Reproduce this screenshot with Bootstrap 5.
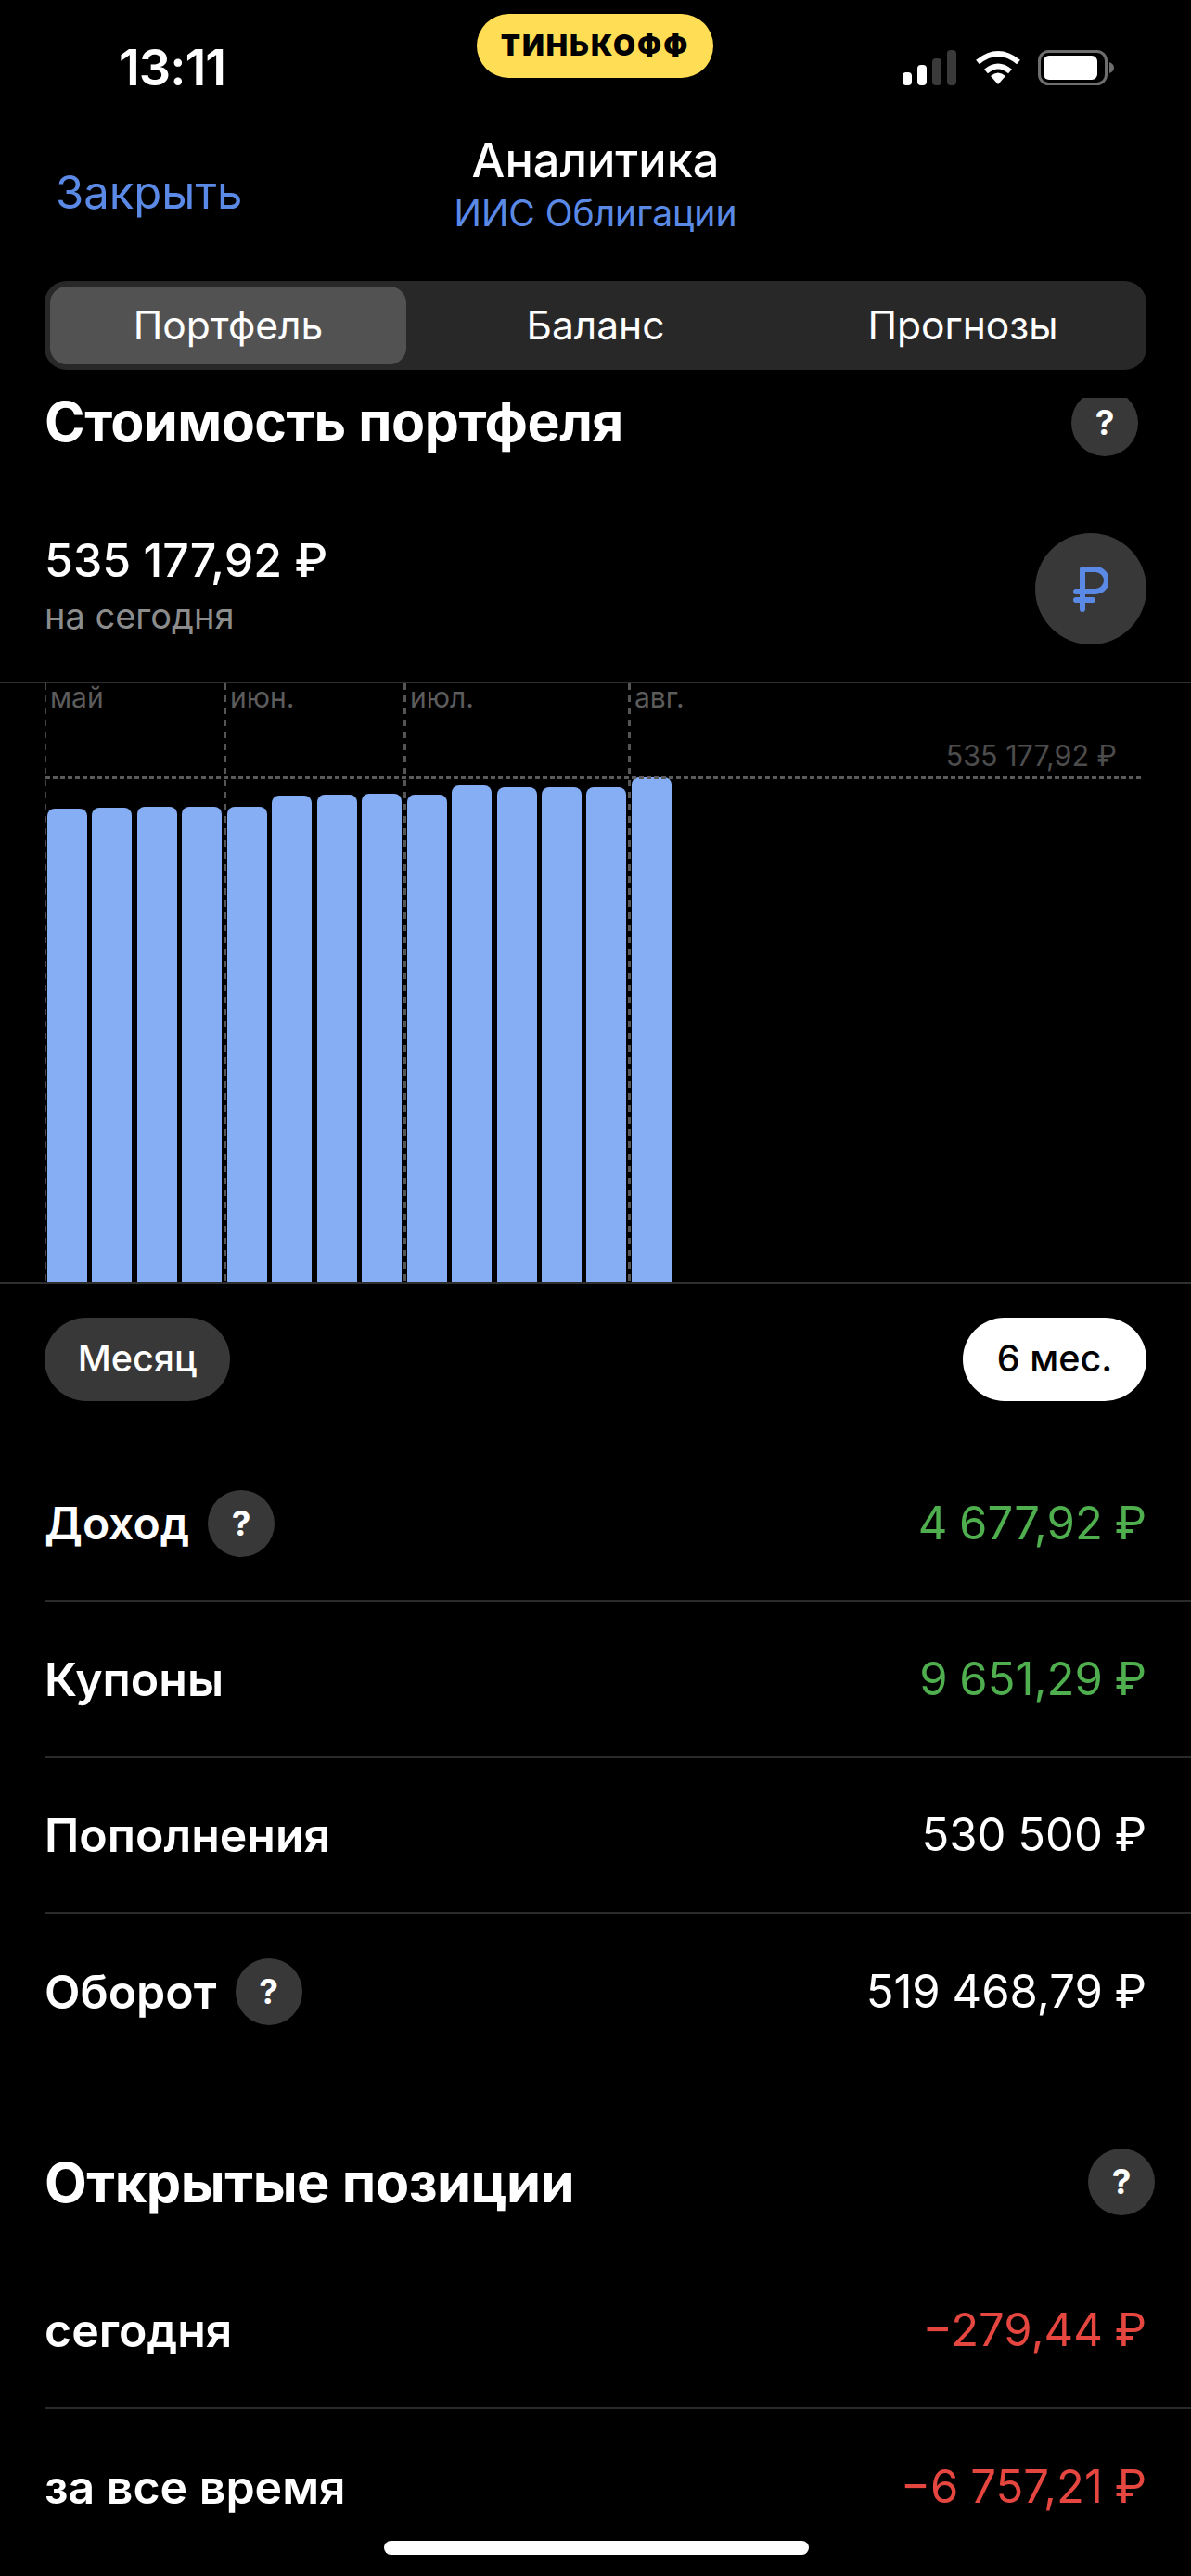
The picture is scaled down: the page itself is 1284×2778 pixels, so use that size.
<!DOCTYPE html>
<html lang="ru">
<head>
    <meta charset="UTF-8" />
    <meta name="viewport" content="width=device-width, initial-scale=1" />
    <title>Аналитика</title>
    <link href="https://cdn.jsdelivr.net/npm/bootstrap@5.3.0/dist/css/bootstrap.min.css" rel="stylesheet" />
    <style>
        html, body {
            background: #000;
        }

        body {
            font-family: Inter, "Noto Sans", sans-serif;
            color: #fff;
            width: 1284px;
            height: 2778px;
            overflow: hidden;
            position: relative;
        }

        .status-bar {
            height: 118px;
        }

        .status-time {
            width: 514px;
            padding: 44px 0 0 128px;
            font-size: 54px;
            line-height: 58px;
            font-weight: 600;
            letter-spacing: -1px;
        }

        .brand-pill {
            width: 255px;
            height: 69px;
            margin-top: 15px;
            background: #ffdd55;
            border-radius: 35px;
            color: #000;
            font-size: 31px;
            font-weight: 900;
            letter-spacing: 2px;
        }

        .status-icons {
            padding: 54px 0 0 204px;
            gap: 18px;
        }

        .top-nav {
            height: 185px;
            position: relative;
        }

        .close-link {
            position: absolute;
            left: 60px;
            top: 60px;
            font-size: 49px;
            line-height: 60px;
            color: #5b8ae6;
            text-decoration: none;
        }

        .nav-title {
            padding-top: 28px;
            font-size: 50.5px;
            line-height: 54px;
            font-weight: 500;
        }

        .nav-sub {
            margin-top: 7px;
            font-size: 39px;
            line-height: 46px;
            color: #5b8ae6;
        }

        .segments {
            margin: 0 48px;
            height: 96px;
            padding: 6px;
            background: #282828;
            border-radius: 24px;
        }

        .segment-item {
            width: 384px;
            font-size: 42.5px;
            color: #fff;
        }

        .segment-item.is-active {
            background: #525252;
            border-radius: 18px;
        }

        .segments .segment-item + .segment-item {
            margin-left: 12px;
        }

        .value-block {
            margin-top: 30px;
            height: 306px;
            padding: 0 48px;
        }

        .section-title {
            font-size: 59px;
            line-height: 70px;
            font-weight: 700;
            letter-spacing: -0.5px;
        }

        .value-block .section-title {
            line-height: 52px;
        }

        .help-dot {
            width: 72px;
            height: 72px;
            flex: none;
            background: #383838;
            border-radius: 50%;
            font-size: 37px;
            font-weight: 700;
            color: #fff;
        }

        .value-top {
            padding-right: 9px;
        }

        .help-clip {
            height: 63px;
            overflow: hidden;
        }

        .help-clip .help-dot {
            margin-top: -9px;
        }

        .value-body {
            margin-top: 82px;
        }

        .value-num {
            font-size: 50px;
            line-height: 60px;
            font-weight: 500;
        }

        .value-caption {
            margin-top: 8px;
            font-size: 38px;
            line-height: 44px;
            color: #8c8c8c;
        }

        .currency-btn {
            width: 120px;
            height: 120px;
            background: #383838;
            border-radius: 50%;
            margin-top: 1px;
        }

        .chart-box {
            height: 650px;
            border-top: 2px solid #2f2f2f;
            border-bottom: 2px solid #2f2f2f;
            position: relative;
        }

        .chart-bars {
            position: absolute;
            left: 51px;
            bottom: 0;
            height: 100%;
            gap: 5.46px;
        }

        .chart-bar {
            width: 43px;
            background: #86aef5;
            border-radius: 8px 8px 0 0;
        }

        .grid-v {
            position: absolute;
            top: 0;
            bottom: 0;
            width: 3px;
            background: repeating-linear-gradient(to bottom, #555 0 7px, transparent 7px 13px);
        }

        .grid-v.is-first {
            width: 2px;
            background: repeating-linear-gradient(to bottom, #444 0 7px, transparent 7px 13px);
        }

        .grid-h {
            position: absolute;
            left: 49px;
            width: 1182px;
            top: 100px;
            height: 3px;
            background: repeating-linear-gradient(to right, #5a5a5a 0 5px, transparent 5px 8px);
        }

        .month-label {
            position: absolute;
            top: -2px;
            font-size: 30px;
            line-height: 34px;
            color: #5c5c5c;
        }

        .grid-value {
            position: absolute;
            right: 80px;
            top: 60px;
            font-size: 30.5px;
            line-height: 36px;
            color: #4c4c4c;
        }

        .period-row {
            padding: 36px 48px 0;
        }

        .period-pill {
            height: 90px;
            border-radius: 45px;
            font-size: 39.5px;
            font-weight: 500;
        }

        .pill-month {
            width: 200px;
            background: #383838;
            color: #fff;
        }

        .pill-half {
            width: 198px;
            background: #fff;
            color: #000;
        }

        .stat-list {
            margin-top: 49px;
            margin-left: 48px;
        }

        .stat-row {
            height: 168px;
            padding-right: 48px;
            border-bottom: 2px solid #2a2a2a;
            font-size: 50px;
        }

        .stat-row:last-child {
            border-bottom: 0;
        }

        .stat-row .help-dot {
            margin-left: 4px;
        }

        .stat-label {
            font-weight: 600;
        }

        .stat-label.is-narrow {
            font-size: 48px;
        }

        .stat-value {
            font-size: 49px;
            font-weight: 400;
            word-spacing: -1px;
        }

        .is-up {
            color: #4fae4e;
        }

        .is-down {
            color: #e5463f;
        }

        .positions-head {
            margin-top: 85px;
            padding: 0 39px 0 48px;
        }

        .positions-head .section-title {
            font-size: 59.5px;
        }

        .stat-list.is-open {
            margin-top: 41px;
        }

        .home-bar {
            position: absolute;
            left: 414px;
            bottom: 23px;
            width: 458px;
            height: 15px;
            background: #fff;
            border-radius: 8px;
        }
    </style>
</head>
<body>
    <div class="status-bar d-flex">
        <div class="status-time">13:11</div>
        <div class="brand-pill d-flex align-items-center justify-content-center">ТИНЬКОФФ</div>
        <div class="status-icons d-flex align-items-start">
            <svg width="60" height="38" viewBox="0 0 60 38">
                <rect x="0" y="24" width="10" height="14" rx="4" fill="#fff" />
                <rect x="16" y="16" width="10" height="22" rx="4" fill="#fff" />
                <rect x="32" y="9" width="10" height="29" rx="4" fill="#3a3a3a" />
                <rect x="48" y="0" width="10" height="38" rx="4" fill="#3a3a3a" />
            </svg>
            <svg width="50" height="38" viewBox="0 0 50 38">
                <path d="M3 13 Q25 -5 47 13" fill="none" stroke="#fff" stroke-width="6" />
                <path d="M12 23 Q25 12 38 23" fill="none" stroke="#fff" stroke-width="6" />
                <path d="M17 28 Q25 21 33 28 L25 37 Z" fill="#fff" />
            </svg>
            <svg width="84" height="38" viewBox="0 0 84 38">
                <rect x="1.5" y="1.5" width="72" height="35" rx="10" fill="none" stroke="#6e6e6e" stroke-width="3" />
                <rect x="6" y="6" width="58" height="26" rx="6" fill="#fff" />
                <path d="M77 13 Q82 15 82 19 Q82 23 77 25 Z" fill="#6e6e6e" />
            </svg>
        </div>
    </div>

    <div class="top-nav text-center">
        <a class="close-link" href="#">Закрыть</a>
        <div class="nav-title">Аналитика</div>
        <div class="nav-sub">ИИС Облигации</div>
    </div>

    <div class="segments d-flex">
        <div class="segment-item is-active d-flex align-items-center justify-content-center">Портфель</div>
        <div class="segment-item d-flex align-items-center justify-content-center">Баланс</div>
        <div class="segment-item d-flex align-items-center justify-content-center">Прогнозы</div>
    </div>

    <div class="value-block">
        <div class="value-top d-flex justify-content-between align-items-start">
            <div class="section-title">Стоимость портфеля</div>
            <div class="help-clip">
                <div class="help-dot d-flex align-items-center justify-content-center">?</div>
            </div>
        </div>
        <div class="value-body d-flex justify-content-between align-items-start">
            <div>
                <div class="value-num">535 177,92 ₽</div>
                <div class="value-caption">на сегодня</div>
            </div>
            <div class="currency-btn d-flex align-items-center justify-content-center">
                <svg width="38" height="50" viewBox="0 0 38 50">
                    <path d="M10 47 V4 H24 A11.5 11.5 0 0 1 24 28 H3 M3 37 H21" fill="none" stroke="#5b8ae6" stroke-width="6" stroke-linecap="round" stroke-linejoin="round" />
                </svg>
            </div>
        </div>
    </div>

    <div class="chart-box">
        <div class="grid-v is-first" style="left: 48px"></div>
        <div class="grid-v" style="left: 241px"></div>
        <div class="grid-v" style="left: 435px"></div>
        <div class="grid-v" style="left: 677px"></div>
        <div class="chart-bars d-flex align-items-end" id="bars"></div>
        <div class="grid-h"></div>
        <span class="month-label" style="left: 54px">май</span>
        <span class="month-label" style="left: 248px">июн.</span>
        <span class="month-label" style="left: 442px">июл.</span>
        <span class="month-label" style="left: 684px">авг.</span>
        <span class="grid-value">535 177,92 ₽</span>
    </div>

    <div class="period-row d-flex justify-content-between">
        <div class="period-pill pill-month d-flex align-items-center justify-content-center">Месяц</div>
        <div class="period-pill pill-half d-flex align-items-center justify-content-center">6 мес.</div>
    </div>

    <div class="stat-list">
        <div class="stat-row d-flex justify-content-between align-items-center">
            <div class="d-flex align-items-center gap-3">
                <span class="stat-label is-narrow">Доход</span>
                <span class="help-dot d-flex align-items-center justify-content-center">?</span>
            </div>
            <span class="stat-value is-up">4 677,92 ₽</span>
        </div>
        <div class="stat-row d-flex justify-content-between align-items-center">
            <span class="stat-label">Купоны</span>
            <span class="stat-value is-up">9 651,29 ₽</span>
        </div>
        <div class="stat-row d-flex justify-content-between align-items-center">
            <span class="stat-label">Пополнения</span>
            <span class="stat-value">530 500 ₽</span>
        </div>
        <div class="stat-row d-flex justify-content-between align-items-center">
            <div class="d-flex align-items-center gap-3">
                <span class="stat-label">Оборот</span>
                <span class="help-dot d-flex align-items-center justify-content-center">?</span>
            </div>
            <span class="stat-value">519 468,79 ₽</span>
        </div>
    </div>

    <div class="positions-head d-flex justify-content-between align-items-center">
        <div class="section-title">Открытые позиции</div>
        <div class="help-dot d-flex align-items-center justify-content-center">?</div>
    </div>

    <div class="stat-list is-open">
        <div class="stat-row d-flex justify-content-between align-items-center">
            <span class="stat-label">сегодня</span>
            <span class="stat-value is-down">−279,44 ₽</span>
        </div>
        <div class="stat-row d-flex justify-content-between align-items-center">
            <span class="stat-label">за все время</span>
            <span class="stat-value is-down">−6 757,21 ₽</span>
        </div>
    </div>

    <div class="home-bar"></div>

    <script src="https://cdn.jsdelivr.net/npm/bootstrap@5.3.0/dist/js/bootstrap.bundle.min.js"></script>
    <script>
        // bar tops in page px, chart bottom is at 1383
        const barTops = [872, 871, 870, 870, 870, 858, 857, 856, 857, 847, 849, 849, 849, 838];
        const bars = document.getElementById('bars');
        barTops.forEach((top) => {
            const bar = document.createElement('div');
            bar.className = 'chart-bar';
            bar.style.height = (1383 - top) + 'px';
            bars.appendChild(bar);
        });
    </script>
</body>
</html>
